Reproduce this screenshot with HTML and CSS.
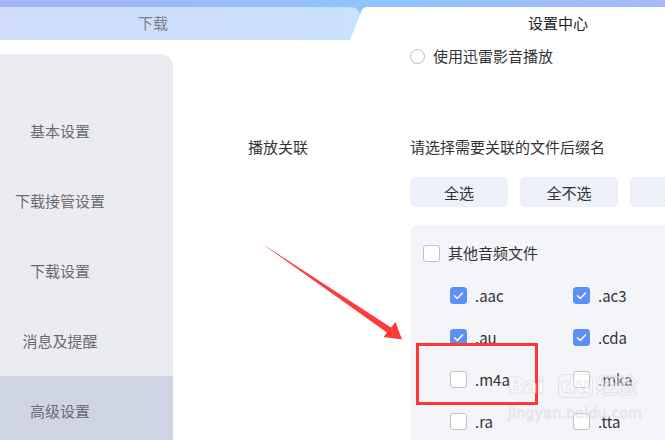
FILE: index.html
```html
<!DOCTYPE html>
<html lang="zh-CN">
<head>
<meta charset="utf-8">
<title>设置中心</title>
<link rel="stylesheet" href="styles.css">
</head>
<body>
<div class="app">
  <header class="tabs">
    <div class="tab tab-inactive">下载</div>
    <div class="tab tab-active">设置中心</div>
  </header>
  <div class="main-area">
    <nav class="sidebar">
      <div class="nav-item">基本设置</div>
      <div class="nav-item">下载接管设置</div>
      <div class="nav-item">下载设置</div>
      <div class="nav-item">消息及提醒</div>
      <div class="nav-item active">高级设置</div>
    </nav>
    <main class="content">
      <div class="radio-row"><span class="radio"></span><span>使用迅雷影音播放</span></div>
      <div class="section">
        <div class="section-label">播放关联</div>
        <div class="section-body">
          <div class="hint">请选择需要关联的文件后缀名</div>
          <div class="btns">
            <button class="btn">全选</button>
            <button class="btn">全不选</button>
            <button class="btn">反选</button>
          </div>
          <div class="panel">
            <div class="group-head"><span class="cb"></span><span>其他音频文件</span></div>
            <div class="grid">
              <div class="opt"><span class="cb on"><svg viewBox="0 0 17 17"><polyline points="4.5,8.8 7.3,11.4 12.5,6"/></svg></span>.aac</div>
              <div class="opt"><span class="cb on"><svg viewBox="0 0 17 17"><polyline points="4.5,8.8 7.3,11.4 12.5,6"/></svg></span>.ac3</div>
              <div class="opt"><span class="cb on"><svg viewBox="0 0 17 17"><polyline points="4.5,8.8 7.3,11.4 12.5,6"/></svg></span>.au</div>
              <div class="opt"><span class="cb on"><svg viewBox="0 0 17 17"><polyline points="4.5,8.8 7.3,11.4 12.5,6"/></svg></span>.cda</div>
              <div class="opt"><span class="cb"></span>.m4a</div>
              <div class="opt"><span class="cb"></span>.mka</div>
              <div class="opt"><span class="cb"></span>.ra</div>
              <div class="opt"><span class="cb"></span>.tta</div>
            </div>
          </div>
        </div>
      </div>
    </main>
  </div>

  <svg class="arrow" viewBox="0 0 665 440" width="665" height="440">
    <polygon points="261,243 391,327.5 395.5,322 402,339.5 383.5,337 387,332.5"/>
  </svg>
  <div class="highlight"></div>
  <div class="watermark">
    <div class="wm-logo">Bai<span class="du">du</span>经验</div>
    <div class="wm-url">jingyan.baidu.com</div>
  </div>
</div>
</body>
</html>
```

FILE: styles.css
```css
* { box-sizing: border-box; }
html, body { margin: 0; padding: 0; }
body {
  width: 665px;
  height: 440px;
  overflow: hidden;
  background: #fff;
  font-family: "Noto Sans CJK SC", "Noto Sans", sans-serif;
  color: #333;
}
.app {
  position: relative;
  width: 665px;
  height: 440px;
  overflow: hidden;
}

/* tabs */
.tabs {
  display: flex;
  height: 40px;
  padding-top: 7px;
  background: linear-gradient(90deg, #a2b4f9 0%, #95c0fc 45%, #8ec6fd 55%, #a6b8f8 100%);
}
.tab {
  height: 33px;
  font-size: 15px;
  line-height: 31px;
  text-align: center;
}
.tab-inactive {
  width: 360px;
  padding-right: 54px;
  color: #7b7f88;
  background: linear-gradient(90deg, #cfdcfb 0%, #cddffd 60%, #c9e2fe 100%);
  border-top-right-radius: 9px;
}
.tab-active {
  flex: 1;
  margin-left: -10px;
  padding-left: 101px;
  background: #fff;
  color: #1e1e1e;
  clip-path: path('M0 33 L11.5 3.5 Q13 0 17 0 L400 0 L400 33 Z');
}

/* body */
.main-area {
  display: flex;
  height: 400px;
}
.sidebar {
  width: 173px;
  margin-top: 14px;
  padding-top: 42px;
  background: #ebecf2;
  border-top-right-radius: 12px;
  flex-shrink: 0;
}
.nav-item {
  height: 70px;
  line-height: 70px;
  padding-right: 53px;
  text-align: center;
  font-size: 15px;
  color: #6b6b6f;
  white-space: nowrap;
}
.nav-item.active {
  background: #d0d5e6;
}

.content {
  flex: 1;
  padding-left: 75px;
  display: flex;
  flex-direction: column;
  min-width: 0;
}
.radio-row {
  margin-top: 6px;
  margin-left: 162px;
  height: 20px;
  display: flex;
  align-items: center;
  gap: 8px;
  font-size: 15px;
  line-height: 20px;
  white-space: nowrap;
}
.radio {
  width: 15px;
  height: 15px;
  border: 1px solid #bdbdbd;
  border-radius: 50%;
  background: #fff;
  flex-shrink: 0;
}

.section {
  margin-top: 71px;
  display: grid;
  grid-template-columns: 162px 1fr;
  flex: 1;
  min-height: 0;
}
.section-label {
  font-size: 15px;
  line-height: 20px;
  height: 20px;
}
.section-body {
  display: flex;
  flex-direction: column;
  min-width: 0;
}
.hint {
  font-size: 15px;
  line-height: 20px;
  height: 20px;
  white-space: nowrap;
}
.btns {
  margin-top: 20px;
  display: flex;
  gap: 12px;
}
.btn {
  width: 98px;
  height: 30px;
  flex-shrink: 0;
  border: none;
  border-radius: 5px;
  background: #eef1f9;
  font: inherit;
  font-size: 15px;
  color: #333;
  padding: 0;
}

.panel {
  margin-top: 18px;
  width: 300px;
  flex: 1;
  background: #f4f5f9;
  border-top-left-radius: 8px;
  padding: 18px 0 0 13px;
}
.group-head {
  display: flex;
  align-items: center;
  gap: 8px;
  height: 20px;
  font-size: 15px;
  line-height: 20px;
  white-space: nowrap;
}
.cb {
  width: 17px;
  height: 17px;
  border: 1px solid #c2c2c6;
  border-radius: 3px;
  background: #fff;
  flex-shrink: 0;
  display: flex;
}
.cb.on {
  background: #5d8ff8;
  border-color: #5d8ff8;
}
.cb svg {
  width: 17px;
  height: 17px;
  margin: -1px;
}
.cb svg polyline {
  fill: none;
  stroke: #fff;
  stroke-width: 1.5;
  stroke-linecap: round;
  stroke-linejoin: round;
}
.grid {
  margin-top: 11px;
  padding-left: 27px;
  display: grid;
  grid-template-columns: 123px 123px;
  grid-auto-rows: 42px;
}
.opt {
  display: flex;
  align-items: center;
  gap: 8px;
  font-size: 15px;
  color: #333;
}

/* annotations */
.arrow {
  position: absolute;
  left: 0;
  top: 0;
  pointer-events: none;
}
.arrow polygon { fill: #ff3a3a; }
.highlight {
  position: absolute;
  left: 416px;
  top: 343px;
  width: 122px;
  height: 62px;
  border: 3px solid #ff3636;
}
.watermark {
  position: absolute;
  left: 508px;
  top: 372px;
  width: 124px;
  text-align: center;
  color: rgba(255, 255, 255, 0.5);
  -webkit-text-stroke: 1px rgba(205, 205, 210, 0.45);
  font-family: "DejaVu Sans", "Noto Sans CJK SC", sans-serif;
  pointer-events: none;
}
.wm-logo {
  font-size: 21px;
  font-weight: bold;
  line-height: 28px;
  white-space: nowrap;
  letter-spacing: -0.5px;
}
.wm-logo .du {
  display: inline-block;
  margin: 0 3px 0 14px;
  padding: 0 2px;
  border: 1px solid rgba(205, 205, 210, 0.45);
  border-radius: 6px;
  line-height: 22px;
}
.wm-url {
  font-size: 14px;
  line-height: 18px;
  margin-top: 4px;
  letter-spacing: 0.3px;
}
```
